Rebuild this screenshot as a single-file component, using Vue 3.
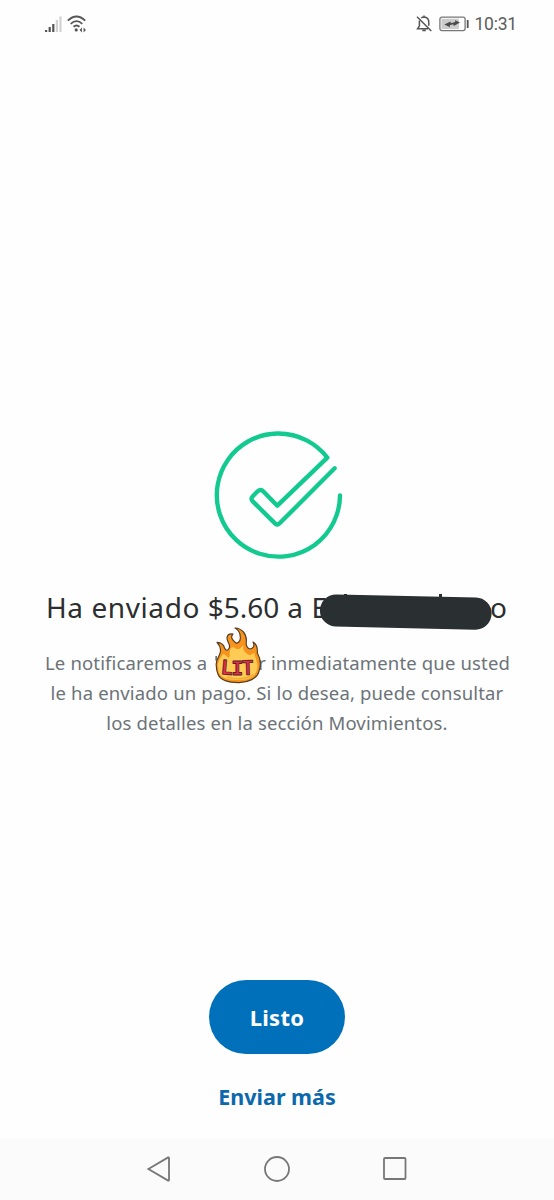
<script setup>
import { ref } from "vue";

const time = ref("10:31");
const amount = ref("$5.60");

const bars = [
  { x: 0, height: 2, on: true },
  { x: 3.6, height: 5, on: true },
  { x: 7.2, height: 8, on: true },
  { x: 10.8, height: 12, on: false },
  { x: 14.4, height: 15.5, on: false },
];
</script>

<template>
  <div class="screen">
    <header class="status">
      <div class="status-side">
        <svg class="signal" width="18" height="17" viewBox="0 0 18 17">
          <rect
            v-for="bar in bars"
            :key="bar.x"
            :x="bar.x"
            :y="16 - bar.height"
            width="2.2"
            :height="bar.height"
            :fill="bar.on ? '#555' : '#d2d2d2'"
          />
        </svg>
        <svg width="20" height="18" viewBox="0 0 20 18" fill="none" stroke="#555" stroke-width="1.8">
          <path d="M0.8 5.6 Q9.5 -2.6 18.2 5.6" />
          <path d="M3.7 8.8 Q9.5 3.4 15.3 8.8" />
          <path d="M6.5 11.8 Q9.5 9.2 12.5 11.8" />
          <circle cx="9.2" cy="14.9" r="1.6" fill="#555" stroke="none" />
          <path d="M14.9 12.4 V17.4 L12.6 14.9 Z M16.6 12.4 V17.4 L18.9 14.9 Z" fill="#555" stroke="none" />
        </svg>
      </div>
      <div class="status-side">
        <svg width="17" height="18" viewBox="0 0 17 18" fill="none" stroke="#555" stroke-width="1.5">
          <path d="M3.4 5.5 V11 L1.6 13.7 H12 M5.2 3 Q6.5 2 8 2 Q12.8 2.3 12.8 7.4 V10.7 M8 .4 V2 M6.3 15.6 H9.8" />
          <path d="M1 1.7 L15.3 16" />
        </svg>
        <svg class="battery" width="31" height="16" viewBox="0 0 31 16">
          <rect x=".9" y="1.2" width="25.2" height="13.4" rx="2" fill="#fff" stroke="#777" stroke-width="1.3" />
          <rect x="2.4" y="2.7" width="17.5" height="10.4" fill="#ccc" />
          <path d="M5.3 8.6 L11.5 5.4 L11.8 7.2 L16.2 5.9 L16 4.2 L21 6.4 L14.8 10 L14.3 8.3 L10.8 9.3 L11 11.2 Z" fill="#4b4b4b" />
          <rect x="27.8" y="4" width="1.8" height="8" fill="#555" />
        </svg>
        <span class="time">{{ time }}</span>
      </div>
    </header>

    <main>
      <svg class="check" width="160" height="150" viewBox="0 0 480 450">
        <path
          d="M420 226 A184.8 184.8 0 1 1 382 113 L232 257 L191 215 Q182 206 173 214 L159 228 Q150 237 159 245 L225 310 Q232 317 239 310 L404 145"
          fill="none"
          stroke="#12c990"
          stroke-width="13"
          stroke-linecap="round"
          stroke-linejoin="round"
        />
      </svg>

      <h1>
        <span class="title-start">Ha enviado <span class="amount">{{ amount }}</span> a E</span>
        <svg class="redacted" width="180" height="40" viewBox="0 0 180 40">
          <path d="M27 4 H30 V9 H27 Z M122 4 H125 V10 H122 Z" fill="#2c2e2f" />
          <path d="M20 4.5 L159 7.5 A15.8 15.8 0 0 1 158 39.7 L18 36.5 A16 16 0 0 1 20 4.5 Z" fill="#2a2f32" />
        </svg>
        <span>o</span>
      </h1>

      <div class="message">
        <p class="line first">
          <span>Le notificaremos a</span>
          <span class="tail">r inmediatamente que usted</span>
          <svg class="flame" width="80" height="70" viewBox="0 0 240 210">
            <rect x="46" y="108" width="5" height="14" fill="#6c7378" />
            <path
              d="M49 138 C46 124 54 115 59 103 C65 89 61 78 51 67 C64 68 72 76 74 85 C78 94 85 92 88 83 C92 73 80 66 81 53 C82 44 90 41 99 42 C91 51 96 57 103 65 C112 76 122 63 121 52 C121 37 115 29 105 24 C126 25 140 42 139 63 C137 76 142 86 150 87 C160 86 165 77 159 66 C170 72 173 86 172 99 C182 116 183 137 177 154 C171 176 145 187 117 188 C86 188 61 181 54 163 C50 154 49 149 49 138 Z"
              fill="#f7941d"
              stroke="#573d22"
              stroke-width="3.5"
              stroke-linejoin="round"
            />
            <path
              d="M54 137 C54 123 63 112 67 105 C72 96 79 111 85 113 C94 108 85 96 92 86 C99 75 105 87 113 88 C128 87 124 73 130 79 C128 94 139 99 146 105 C155 106 160 99 164 98 C162 110 177 126 171 151 C161 176 139 180 115 180 C83 180 60 172 56 155 Z"
              fill="#fecb55"
            />
            <path d="M80 170 Q122 186 160 164" fill="none" stroke="#f8ad36" stroke-width="5" />
            <g class="lit">
              <text x="61" y="162" transform="rotate(5 61 162)">L</text>
              <text x="94" y="165">I</text>
              <text x="126" y="165" transform="rotate(-2 126 165)">T</text>
            </g>
          </svg>
        </p>
        <p class="line second">le ha enviado un pago. Si lo desea, puede consultar</p>
        <p class="line third">los detalles en la sección Movimientos.</p>
      </div>
    </main>

    <div class="actions">
      <button class="done">Listo</button>
      <a class="more">Enviar más</a>
    </div>

    <nav>
      <svg width="26" height="28" viewBox="0 0 26 28">
        <path d="M2.4 14 L22.2 2.4 Q23 2 23 3 V25 Q23 26 22.2 25.6 Z" />
      </svg>
      <svg width="28" height="28" viewBox="0 0 28 28">
        <circle cx="14" cy="14" r="12" />
      </svg>
      <svg width="26" height="26" viewBox="0 0 26 26">
        <rect x="2" y="2" width="21.5" height="21" rx="1" />
      </svg>
    </nav>
  </div>
</template>

<style>
body {
  margin: 0;
  background: #fefefe;
}
</style>

<style scoped>
.screen {
  width: 554px;
  height: 1200px;
  display: flex;
  flex-direction: column;
  background: #fefefe;
  font-family: "Noto Sans", sans-serif;
  overflow: hidden;
}

svg {
  display: block;
  flex: none;
}

.status {
  height: 48px;
  box-sizing: border-box;
  padding: 0 37px 0 45px;
  display: flex;
  align-items: center;
  justify-content: space-between;
}

.status-side {
  display: flex;
  align-items: center;
  gap: 4px;
}

.battery {
  margin-left: 2px;
}

.time {
  font: 17.5px/24px Roboto, sans-serif;
  color: #5c5c5c;
  letter-spacing: -0.2px;
}

main {
  height: 932px;
  display: flex;
  flex-direction: column;
}

.check {
  margin: 372px 0 0 200px;
}

h1 {
  margin: 17px 0 0 46px;
  height: 44px;
  display: flex;
  font-size: 28px;
  line-height: 40px;
  font-weight: 400;
  color: #2c2e2f;
  white-space: nowrap;
}

.title-start {
  width: 272px;
  letter-spacing: 0.58px;
}

.amount {
  letter-spacing: 0;
}

.redacted {
  position: relative;
  margin: 3px -7px 0 -1px;
}

.message {
  margin-top: 17px;
  color: #6c7378;
  font-size: 18.5px;
  letter-spacing: 0.15px;
  text-align: center;
}

.line {
  margin: 0;
  height: 30px;
  line-height: 30px;
  white-space: nowrap;
}

.first {
  position: relative;
  display: flex;
  justify-content: space-between;
  padding: 0 44px 0 45px;
}

.flame {
  position: absolute;
  left: 200px;
  top: -28px;
}

.lit {
  font: 700 60px "DejaVu Sans Mono", monospace;
  letter-spacing: 0;
  fill: #e52c4b;
  stroke: #572126;
  stroke-width: 2.5px;
  stroke-linejoin: round;
}

.actions {
  height: 158px;
  display: flex;
  flex-direction: column;
  align-items: center;
}

.done {
  width: 136px;
  height: 74px;
  padding: 0;
  border: 0;
  border-radius: 37px;
  background: #0070ba;
  color: #fff;
  font: 700 22px/74px "Noto Sans", sans-serif;
  letter-spacing: 0.3px;
}

.more {
  margin-top: 28px;
  color: #0c68ac;
  font-size: 21.5px;
  line-height: 30px;
  font-weight: 700;
}

nav {
  height: 62px;
  display: flex;
  align-items: center;
  justify-content: space-between;
  padding: 0 146px;
  background: #fbfbfb;
}

nav svg {
  fill: none;
  stroke: #777;
  stroke-width: 1.8;
}
</style>
